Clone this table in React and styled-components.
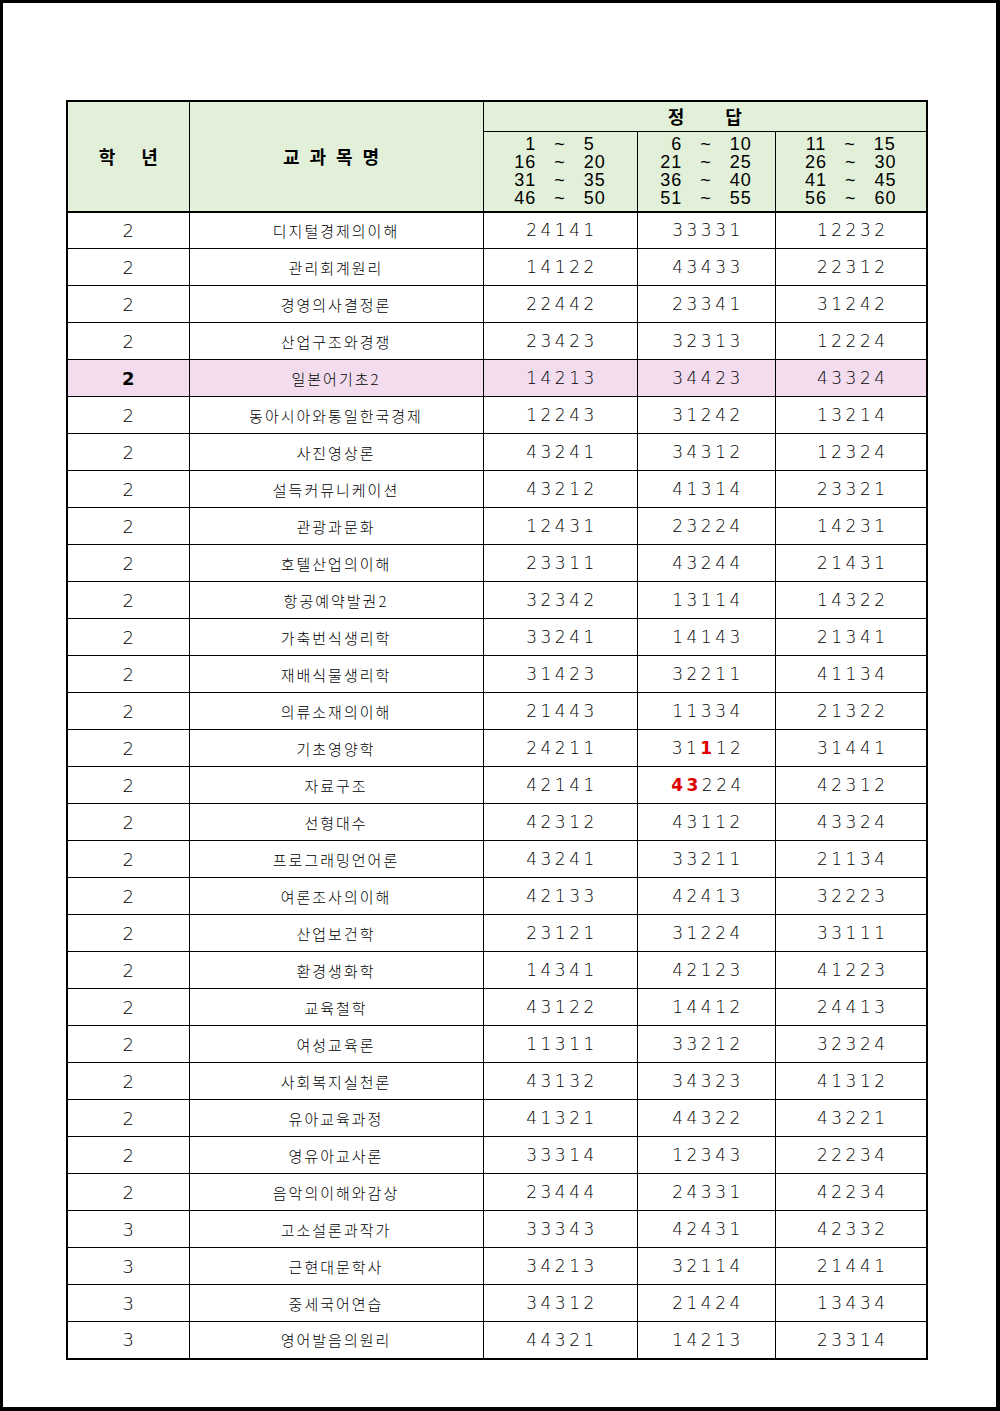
import React from 'react'
import styled, { createGlobalStyle } from 'styled-components'

const GlobalStyle = createGlobalStyle`
  html, body { margin: 0; padding: 0; background: #fff; }
`

const rows = [
  ['2', '디지털경제의이해', '24141', '33331', '12232'],
  ['2', '관리회계원리', '14122', '43433', '22312'],
  ['2', '경영의사결정론', '22442', '23341', '31242'],
  ['2', '산업구조와경쟁', '23423', '32313', '12224'],
  ['2', '일본어기초2', '14213', '34423', '43324', true],
  ['2', '동아시아와통일한국경제', '12243', '31242', '13214'],
  ['2', '사진영상론', '43241', '34312', '12324'],
  ['2', '설득커뮤니케이션', '43212', '41314', '23321'],
  ['2', '관광과문화', '12431', '23224', '14231'],
  ['2', '호텔산업의이해', '23311', '43244', '21431'],
  ['2', '항공예약발권2', '32342', '13114', '14322'],
  ['2', '가축번식생리학', '33241', '14143', '21341'],
  ['2', '재배식물생리학', '31423', '32211', '41134'],
  ['2', '의류소재의이해', '21443', '11334', '21322'],
  ['2', '기초영양학', '24211', [['31'], ['1', true], ['12']], '31441'],
  ['2', '자료구조', '42141', [['43', true], ['224']], '42312'],
  ['2', '선형대수', '42312', '43112', '43324'],
  ['2', '프로그래밍언어론', '43241', '33211', '21134'],
  ['2', '여론조사의이해', '42133', '42413', '32223'],
  ['2', '산업보건학', '23121', '31224', '33111'],
  ['2', '환경생화학', '14341', '42123', '41223'],
  ['2', '교육철학', '43122', '14412', '24413'],
  ['2', '여성교육론', '11311', '33212', '32324'],
  ['2', '사회복지실천론', '43132', '34323', '41312'],
  ['2', '유아교육과정', '41321', '44322', '43221'],
  ['2', '영유아교사론', '33314', '12343', '22234'],
  ['2', '음악의이해와감상', '23444', '24331', '42234'],
  ['3', '고소설론과작가', '33343', '42431', '42332'],
  ['3', '근현대문학사', '34213', '32114', '21441'],
  ['3', '중세국어연습', '34312', '21424', '13434'],
  ['3', '영어발음의원리', '44321', '14213', '23314'],
]

const F = '\u2007'
const ranges = [
  [`${F}1   ~   5${F}`, '16   ~   20', '31   ~   35', '46   ~   50'],
  [`${F}6   ~   10`, '21   ~   25', '36   ~   40', '51   ~   55'],
  ['11   ~   15', '26   ~   30', '41   ~   45', '56   ~   60'],
]

const Page = styled.div`
  box-sizing: border-box;
  width: 1000px;
  height: 1411px;
  border-style: solid;
  border-color: #000;
  border-width: 3px 4px 4px 3px;
  padding: 97px 0 0 63px;
  background: #fff;
`

const Table = styled.table`
  border-collapse: collapse;
  width: 860px;
  table-layout: fixed;
  border: 2px solid #000;
  font-family: "Liberation Sans", "Noto Sans CJK KR", sans-serif;
  color: #000;
`

const HeadCell = styled.th`
  background: #e2f0d9;
  border: 1px solid #000;
  border-bottom-width: ${p => (p.$last ? '2px' : '1px')};
  padding: 0;
  font-family: "Noto Sans CJK KR", sans-serif;
  font-weight: 700;
  font-size: 18px;
  letter-spacing: ${p => p.$spacing || '0px'};
  word-spacing: ${p => p.$gap || '0px'};
  text-align: center;
  vertical-align: middle;
`

const RangeCell = styled.th`
  background: #e2f0d9;
  border: 1px solid #000;
  border-bottom-width: 2px;
  padding: 0;
  height: 79px;
  font-family: "Liberation Sans", sans-serif;
  font-weight: 400;
  font-size: 18px;
  line-height: 18px;
  letter-spacing: 1px;
  text-align: center;
  vertical-align: middle;
`

const RangeLine = styled.div`
  white-space: pre;
`

const Row = styled.tr`
  height: 37px;
  background: ${p => (p.$marked ? '#f2dcee' : '#fff')};
`

const Cell = styled.td`
  border: 1px solid #000;
  padding: 0;
  text-align: center;
  vertical-align: middle;
`

const Grade = styled(Cell)`
  font-family: "DejaVu Sans", "Liberation Sans", sans-serif;
  font-size: 18px;
  font-weight: ${p => (p.$bold ? 700 : 200)};
`

const Subject = styled(Cell)`
  font-family: "Noto Sans CJK KR", sans-serif;
  font-size: 15px;
  font-weight: 300;
  letter-spacing: 2px;
`

const Answer = styled(Cell)`
  font-family: "DejaVu Sans", "Liberation Sans", sans-serif;
  font-size: 17px;
  font-weight: 200;
  letter-spacing: 3.5px;
  padding-left: 4px;
`

const Mark = styled.span`
  color: ${p => (p.$red ? '#e00000' : 'inherit')};
  font-weight: ${p => (p.$red ? 700 : 200)};
`

const renderAnswer = v =>
  typeof v === 'string'
    ? v
    : v.map(([t, red], i) => (
        <Mark key={i} $red={red}>
          {t}
        </Mark>
      ))

export default function App() {
  return (
    <>
      <GlobalStyle />
      <Page>
        <Table>
          <colgroup>
            <col style={{ width: 122 }} />
            <col style={{ width: 294 }} />
            <col style={{ width: 154 }} />
            <col style={{ width: 138 }} />
            <col style={{ width: 152 }} />
          </colgroup>
          <thead>
            <tr style={{ height: 30 }}>
              <HeadCell rowSpan={2} $last $gap="22px">
                학 년
              </HeadCell>
              <HeadCell rowSpan={2} $last $spacing="10px">
                교과목명
              </HeadCell>
              <HeadCell colSpan={3} $gap="37px">
                정 답
              </HeadCell>
            </tr>
            <tr>
              {ranges.map((lines, i) => (
                <RangeCell key={i}>
                  {lines.map(l => (
                    <RangeLine key={l}>{l}</RangeLine>
                  ))}
                </RangeCell>
              ))}
            </tr>
          </thead>
          <tbody>
            {rows.map(([g, name, a, b, c, marked], i) => (
              <Row key={i} $marked={marked}>
                <Grade $bold={marked}>{g}</Grade>
                <Subject>{name}</Subject>
                <Answer>{renderAnswer(a)}</Answer>
                <Answer>{renderAnswer(b)}</Answer>
                <Answer>{renderAnswer(c)}</Answer>
              </Row>
            ))}
          </tbody>
        </Table>
      </Page>
    </>
  )
}
